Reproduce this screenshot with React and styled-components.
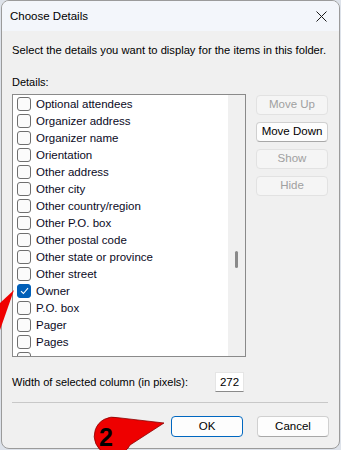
import styled, { createGlobalStyle } from "styled-components";

const GlobalStyle = createGlobalStyle`
  html, body {
    margin: 0;
    padding: 0;
    background: #dde2ea;
  }
  body {
    font-family: "Liberation Sans", Arial, sans-serif;
    font-size: 11px;
    color: #000;
  }
`;

const Stage = styled.div`
  position: relative;
  width: 341px;
  height: 450px;
  overflow: hidden;
`;

const Window = styled.div`
  box-sizing: border-box;
  margin-left: 1px;
  width: 339px;
  height: 449px;
  border: 1px solid #9b9b9b;
  border-radius: 8px;
  background: #f0f0f0;
  display: flex;
  flex-direction: column;
  overflow: hidden;
`;

const TitleBar = styled.div`
  height: 30px;
  flex-shrink: 0;
  display: flex;
  align-items: center;
  justify-content: space-between;
  padding: 0 8px 0 8px;
  background: #f3f6fb;
  font-size: 11.5px;
`;

const CloseButton = styled.span`
  display: flex;
  align-items: center;
  justify-content: center;
  width: 20px;
  height: 20px;
`;

const Body = styled.div`
  flex: 1;
  padding: 0 10px;
  display: flex;
  flex-direction: column;
`;

const Intro = styled.div`
  margin-top: 11px;
  line-height: 16px;
  white-space: nowrap;
  font-size: 11.2px;
`;

const Label = styled.div`
  margin-top: 16px;
  line-height: 16px;
`;

const Main = styled.div`
  margin-top: 4px;
  display: flex;
  gap: 10px;
  align-items: flex-start;
`;

const ListBox = styled.div`
  box-sizing: border-box;
  width: 234px;
  height: 263px;
  border: 1px solid #8a8a8a;
  background: #fff;
  display: flex;
`;

const Items = styled.div`
  flex: 1;
  overflow: hidden;
`;

const Row = styled.div`
  height: 17px;
  display: flex;
  align-items: center;
  gap: 5px;
  padding-left: 4px;
  white-space: nowrap;
  font-size: 11.5px;
  color: #0a0a1e;
`;

const Box = styled.span`
  box-sizing: border-box;
  width: 14px;
  height: 14px;
  flex-shrink: 0;
  border-radius: 3px;
  border: 1px solid ${(p) => (p.$checked ? "#005fb8" : "#6f6f6f")};
  background: ${(p) => (p.$checked ? "#005fb8" : "#fbfbfb")};
  display: flex;
  align-items: center;
  justify-content: center;
`;

const Track = styled.div`
  width: 17px;
  background: #f0f0f0;
  display: flex;
  justify-content: center;
  padding-top: 156px;
  box-sizing: border-box;
`;

const Thumb = styled.div`
  width: 3px;
  height: 17px;
  border-radius: 2px;
  background: #8a8a8a;
`;

const Side = styled.div`
  display: flex;
  flex-direction: column;
  gap: 7px;
  margin-top: 1px;
`;

const Button = styled.button`
  box-sizing: border-box;
  width: 72px;
  height: ${(p) => (p.$tall ? "21px" : "20px")};
  padding: 0;
  border-radius: 4px;
  font-family: inherit;
  font-size: 11.5px;
  line-height: 1;
  border: 1px solid ${(p) => (p.$primary ? "#0067c0" : p.disabled ? "#e2e2e2" : "#d0d0d0")};
  border-bottom-color: ${(p) => (p.$primary ? "#0067c0" : p.disabled ? "#e2e2e2" : "#a8a8a8")};
  background: ${(p) => (p.disabled ? "#f5f5f5" : "#fdfdfd")};
  color: ${(p) => (p.disabled ? "#a0a0a0" : "#000")};
`;

const WidthRow = styled.div`
  margin-top: 15px;
  width: 232px;
  display: flex;
  align-items: center;
  justify-content: space-between;
`;

const NumberField = styled.div`
  box-sizing: border-box;
  width: 29px;
  height: 20px;
  background: #fff;
  border: 1px solid #e5e5e5;
  border-bottom-color: #8a8a8a;
  display: flex;
  align-items: center;
  justify-content: center;
  font-size: 11.5px;
`;

const Divider = styled.div`
  margin-top: 10px;
  height: 1px;
  background: #c8c8c8;
  margin-right: 1px;
`;

const Footer = styled.div`
  margin-top: 13px;
  display: flex;
  justify-content: flex-end;
  gap: 14px;
`;

const Overlay = styled.svg`
  position: absolute;
  left: 0;
  top: 0;
  pointer-events: none;
`;

const items = [
  "Optional attendees",
  "Organizer address",
  "Organizer name",
  "Orientation",
  "Other address",
  "Other city",
  "Other country/region",
  "Other P.O. box",
  "Other postal code",
  "Other state or province",
  "Other street",
  "Owner",
  "P.O. box",
  "Pager",
  "Pages",
  "",
];

function Check() {
  return (
    <svg width="9" height="8" viewBox="0 0 9 8">
      <path d="M1 4.2 L3.4 6.5 L8 1.2" fill="none" stroke="#fff" strokeWidth="1.1" />
    </svg>
  );
}

export default function App() {
  return (
    <>
      <GlobalStyle />
      <Stage>
        <Window>
          <TitleBar>
            <span>Choose Details</span>
            <CloseButton>
              <svg width="11" height="11" viewBox="0 0 11 11">
                <path d="M0.5 0.5 L10.5 10.5 M10.5 0.5 L0.5 10.5" stroke="#1a1a1a" strokeWidth="1" />
              </svg>
            </CloseButton>
          </TitleBar>
          <Body>
            <Intro>Select the details you want to display for the items in this folder.</Intro>
            <Label>Details:</Label>
            <Main>
              <ListBox>
                <Items>
                  {items.map((name, i) => (
                    <Row key={i}>
                      <Box $checked={name === "Owner"}>{name === "Owner" && <Check />}</Box>
                      <span>{name}</span>
                    </Row>
                  ))}
                </Items>
                <Track>
                  <Thumb />
                </Track>
              </ListBox>
              <Side>
                <Button disabled>Move Up</Button>
                <Button>Move Down</Button>
                <Button disabled>Show</Button>
                <Button disabled>Hide</Button>
              </Side>
            </Main>
            <WidthRow>
              <span>Width of selected column (in pixels):</span>
              <NumberField>272</NumberField>
            </WidthRow>
            <Divider />
            <Footer>
              <Button $primary $tall>OK</Button>
              <Button $tall>Cancel</Button>
            </Footer>
          </Body>
        </Window>
        <Overlay width="341" height="450" viewBox="0 0 341 450">
          <polygon points="14,290 0,303 0,330" fill="#f00000" />
          <path
            d="M164 423 L118 417.7 A19 19 0 1 0 130 445 Z"
            fill="#ee0000"
            stroke="#8a0000"
            strokeWidth="0.8"
          />
          <text
            x="106"
            y="446"
            textAnchor="middle"
            fontFamily="Liberation Sans, Arial, sans-serif"
            fontWeight="700"
            fontSize="25"
            fill="#000"
          >
            2
          </text>
        </Overlay>
      </Stage>
    </>
  );
}
